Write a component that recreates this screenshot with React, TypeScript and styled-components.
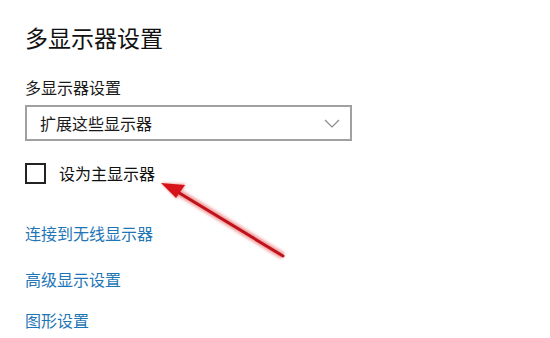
import React from 'react'
import styled, { createGlobalStyle } from 'styled-components'

const GlobalStyle = createGlobalStyle`
    html, body {
        margin: 0;
        padding: 0;
        background: #fff;
    }
    body {
        font-family: "Noto Sans CJK SC", "Noto Sans", sans-serif;
        color: #1a1a1a;
    }
`

const SPage = styled.div`
    position: relative;
    width: 550px;
    height: 338px;
    overflow: hidden;
    padding: 0 25px;
    box-sizing: border-box;
    display: flex;
    flex-direction: column;
    align-items: flex-start;
`

const STitle = styled.h1`
    margin: 22px 0 0;
    font-size: 23px;
    font-weight: 400;
    line-height: 30px;
    color: #111;
`

const SLabel = styled.div`
    margin-top: 25px;
    font-size: 16px;
    line-height: 21px;
`

const SSelect = styled.div`
    margin-top: 7px;
    width: 327px;
    height: 36px;
    box-sizing: border-box;
    border: 2px solid #a0a0a0;
    display: flex;
    align-items: center;
    justify-content: space-between;
    padding: 0 10px 0 13px;
    font-size: 16px;
`

const SCheckRow = styled.label`
    margin-top: 21px;
    display: flex;
    align-items: center;
    gap: 13px;
    font-size: 16px;
    line-height: 22px;
    color: #111;
`

const SCheckBox = styled.span`
    width: 21px;
    height: 21px;
    box-sizing: border-box;
    border: 2px solid #222;
`

const SLink = styled.a<{ $top: number }>`
    margin-top: ${p => p.$top}px;
    font-size: 16px;
    line-height: 22px;
    color: #1f76b6;
    text-decoration: none;
`

const SArrow = styled.svg`
    position: absolute;
    left: 0;
    top: 0;
    pointer-events: none;
`

const Chevron = () => (
    <svg width="16" height="9" viewBox="0 0 16 9">
        <path d="M1 1 L8 8 L15 1" fill="none" stroke="#8a8a8a" strokeWidth="1.2" />
    </svg>
)

const App = () => {
    return (
        <>
            <GlobalStyle />
            <SPage>
                <STitle>多显示器设置</STitle>
                <SLabel>多显示器设置</SLabel>
                <SSelect>
                    <span>扩展这些显示器</span>
                    <Chevron />
                </SSelect>
                <SCheckRow>
                    <SCheckBox />
                    设为主显示器
                </SCheckRow>
                <SLink $top={38}>连接到无线显示器</SLink>
                <SLink $top={24}>高级显示设置</SLink>
                <SLink $top={19}>图形设置</SLink>

                {/* red annotation arrow */}
                <SArrow width="550" height="338" viewBox="0 0 550 338">
                    <defs>
                        <filter id="glow" x="-20%" y="-20%" width="140%" height="140%">
                            <feGaussianBlur stdDeviation="1.8" />
                        </filter>
                    </defs>
                    <g filter="url(#glow)" opacity="0.5">
                        <line x1="283" y1="256" x2="178" y2="192" stroke="#e23a3a" strokeWidth="7" />
                        <polygon points="161,183 186,184 177,199" fill="#e23a3a" />
                    </g>
                    <line x1="283" y1="256" x2="176" y2="191" stroke="#bf121a" strokeWidth="3" strokeLinecap="round" />
                    <polygon points="161,183 185,185 176,198" fill="#d8121a" />
                </SArrow>
            </SPage>
        </>
    )
}

export default App
